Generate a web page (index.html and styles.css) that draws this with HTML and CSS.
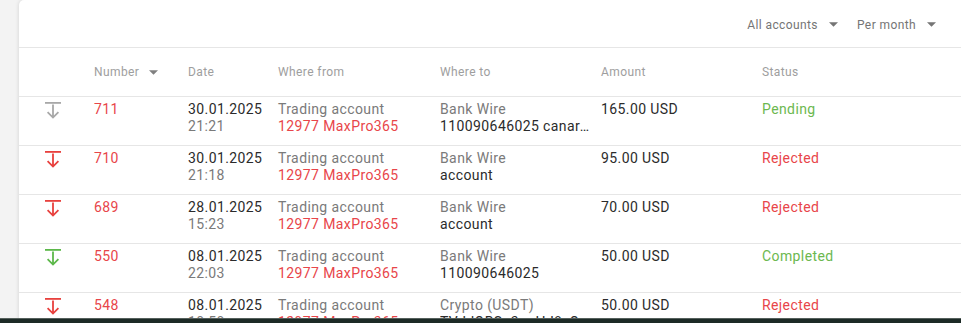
FILE: index.html
```html
<!DOCTYPE html>
<html lang="en">
<head>
<meta charset="utf-8">
<title>Transactions</title>
<link rel="stylesheet" href="styles.css">
</head>
<body>
<div class="page">
  <main class="content">
    <section class="card">
      <div class="toolbar">
        <div class="select">All accounts <svg class="caret" viewBox="0 0 10 5" width="10" height="5"><polygon points="0,0 10,0 5,5"/></svg></div>
        <div class="select">Per month <svg class="caret" viewBox="0 0 10 5" width="10" height="5"><polygon points="0,0 10,0 5,5"/></svg></div>
      </div>
      <div class="table">
        <div class="grid thead">
          <div class="th"></div>
          <div class="th sort">Number <svg class="caret hcaret" viewBox="0 0 10 5" width="10" height="5"><polygon points="0,0 10,0 5,5"/></svg></div>
          <div class="th">Date</div>
          <div class="th">Where from</div>
          <div class="th">Where to</div>
          <div class="th">Amount</div>
          <div class="th">Status</div>
        </div>

        <div class="grid tr">
          <div class="cell icon-cell"><svg class="dir grey" viewBox="0 0 16 17" width="16" height="17"><rect x="0" y="0" width="16" height="1.8"/><path d="M8 2.5V15.5M2.6 10.2L8 15.6L13.4 10.2"/></svg></div>
          <div class="cell red">711</div>
          <div class="cell"><span class="l dark">30.01.2025</span><span class="l grey-t">21:21</span></div>
          <div class="cell"><span class="l grey-t">Trading account</span><span class="l red">12977 MaxPro365</span></div>
          <div class="cell"><span class="l grey-t">Bank Wire</span><span class="l dark ell">110090646025 canara bank</span></div>
          <div class="cell dark">165.00 USD</div>
          <div class="cell green">Pending</div>
        </div>

        <div class="grid tr">
          <div class="cell icon-cell"><svg class="dir redi" viewBox="0 0 16 17" width="16" height="17"><rect x="0" y="0" width="16" height="1.8"/><path d="M8 2.5V15.5M2.6 10.2L8 15.6L13.4 10.2"/></svg></div>
          <div class="cell red">710</div>
          <div class="cell"><span class="l dark">30.01.2025</span><span class="l grey-t">21:18</span></div>
          <div class="cell"><span class="l grey-t">Trading account</span><span class="l red">12977 MaxPro365</span></div>
          <div class="cell"><span class="l grey-t">Bank Wire</span><span class="l dark ell">account</span></div>
          <div class="cell dark">95.00 USD</div>
          <div class="cell red">Rejected</div>
        </div>

        <div class="grid tr">
          <div class="cell icon-cell"><svg class="dir redi" viewBox="0 0 16 17" width="16" height="17"><rect x="0" y="0" width="16" height="1.8"/><path d="M8 2.5V15.5M2.6 10.2L8 15.6L13.4 10.2"/></svg></div>
          <div class="cell red">689</div>
          <div class="cell"><span class="l dark">28.01.2025</span><span class="l grey-t">15:23</span></div>
          <div class="cell"><span class="l grey-t">Trading account</span><span class="l red">12977 MaxPro365</span></div>
          <div class="cell"><span class="l grey-t">Bank Wire</span><span class="l dark ell">account</span></div>
          <div class="cell dark">70.00 USD</div>
          <div class="cell red">Rejected</div>
        </div>

        <div class="grid tr">
          <div class="cell icon-cell"><svg class="dir greeni" viewBox="0 0 16 17" width="16" height="17"><rect x="0" y="0" width="16" height="1.8"/><path d="M8 2.5V15.5M2.6 10.2L8 15.6L13.4 10.2"/></svg></div>
          <div class="cell red">550</div>
          <div class="cell"><span class="l dark">08.01.2025</span><span class="l grey-t">22:03</span></div>
          <div class="cell"><span class="l grey-t">Trading account</span><span class="l red">12977 MaxPro365</span></div>
          <div class="cell"><span class="l grey-t">Bank Wire</span><span class="l dark ell">110090646025</span></div>
          <div class="cell dark">50.00 USD</div>
          <div class="cell green">Completed</div>
        </div>

        <div class="grid tr">
          <div class="cell icon-cell"><svg class="dir redi" viewBox="0 0 16 17" width="16" height="17"><rect x="0" y="0" width="16" height="1.8"/><path d="M8 2.5V15.5M2.6 10.2L8 15.6L13.4 10.2"/></svg></div>
          <div class="cell red">548</div>
          <div class="cell"><span class="l dark">08.01.2025</span><span class="l grey-t">10:50</span></div>
          <div class="cell"><span class="l grey-t">Trading account</span><span class="l red">12977 MaxPro365</span></div>
          <div class="cell"><span class="l grey-t">Crypto (USDT)</span><span class="l dark ell">TVJdQBSo3oaHJ8vQ8x1Ym9GfCZ</span></div>
          <div class="cell dark">50.00 USD</div>
          <div class="cell red">Rejected</div>
        </div>
      </div>
    </section>
  </main>
  <div class="taskbar"></div>
</div>
</body>
</html>
```
FILE: styles.css
```css
* { box-sizing: border-box; }
html, body { margin: 0; padding: 0; }
body {
  background: #f3f3f3;
  font-family: Roboto, "Liberation Sans", Arial, sans-serif;
  letter-spacing: 0.4px;
}
.page {
  height: 323px;
  display: flex;
  flex-direction: column;
  overflow: hidden;
}
.content {
  flex: 1;
  min-height: 0;
  overflow: hidden;
  padding-left: 19px;
}
.card {
  background: #fff;
  border-radius: 5px 0 0 0;
  box-shadow: 0 0 4px rgba(0, 0, 0, 0.14);
  min-height: 100%;
}
.toolbar {
  height: 48px;
  border-bottom: 1px solid #e6e6e6;
  display: flex;
  justify-content: flex-end;
  align-items: center;
  gap: 19px;
  padding-right: 25px;
  padding-top: 2px;
}
.select {
  display: flex;
  align-items: center;
  gap: 11px;
  font-size: 12px;
  color: #757575;
}
.select .caret { width: 9px; height: 5px; }
.caret { fill: #757575; display: block; }
.grid {
  display: grid;
  grid-template-columns: 75px 94px 90px 162px 161px 161px 1fr;
  border-bottom: 1px solid #e6e6e6;
}
.thead {
  height: 49px;
  align-items: center;
}
.th {
  font-size: 12px;
  color: #9e9e9e;
  display: flex;
  align-items: center;
}
.sort { gap: 10px; }
.hcaret { fill: #808080; width: 9px; height: 5px; }
.tr {
  height: 49px;
  padding-top: 4px;
  align-items: start;
}
.cell {
  font-size: 14px;
  line-height: 17px;
  padding-right: 10px;
  min-width: 0;
}
.l { display: block; }
.ell {
  white-space: nowrap;
  overflow: hidden;
  text-overflow: ellipsis;
}
.icon-cell {
  padding-left: 26px;
  padding-top: 1px;
}
.dir { display: block; }
.dir path { fill: none; stroke-width: 1.8; }
.grey rect { fill: #a8a8a8; }
.grey path { stroke: #a8a8a8; }
.redi rect { fill: #e8413e; }
.redi path { stroke: #e8413e; }
.greeni rect { fill: #5cb84a; }
.greeni path { stroke: #5cb84a; }
.red { color: #e8454a; }
.dark { color: #2b2b2b; }
.grey-t { color: #7a7a7a; }
.green { color: #6cb84f; }
.taskbar {
  height: 5px;
  flex: none;
  background: #1c2a26;
  border-top: 1px solid #55605c;
}
```
